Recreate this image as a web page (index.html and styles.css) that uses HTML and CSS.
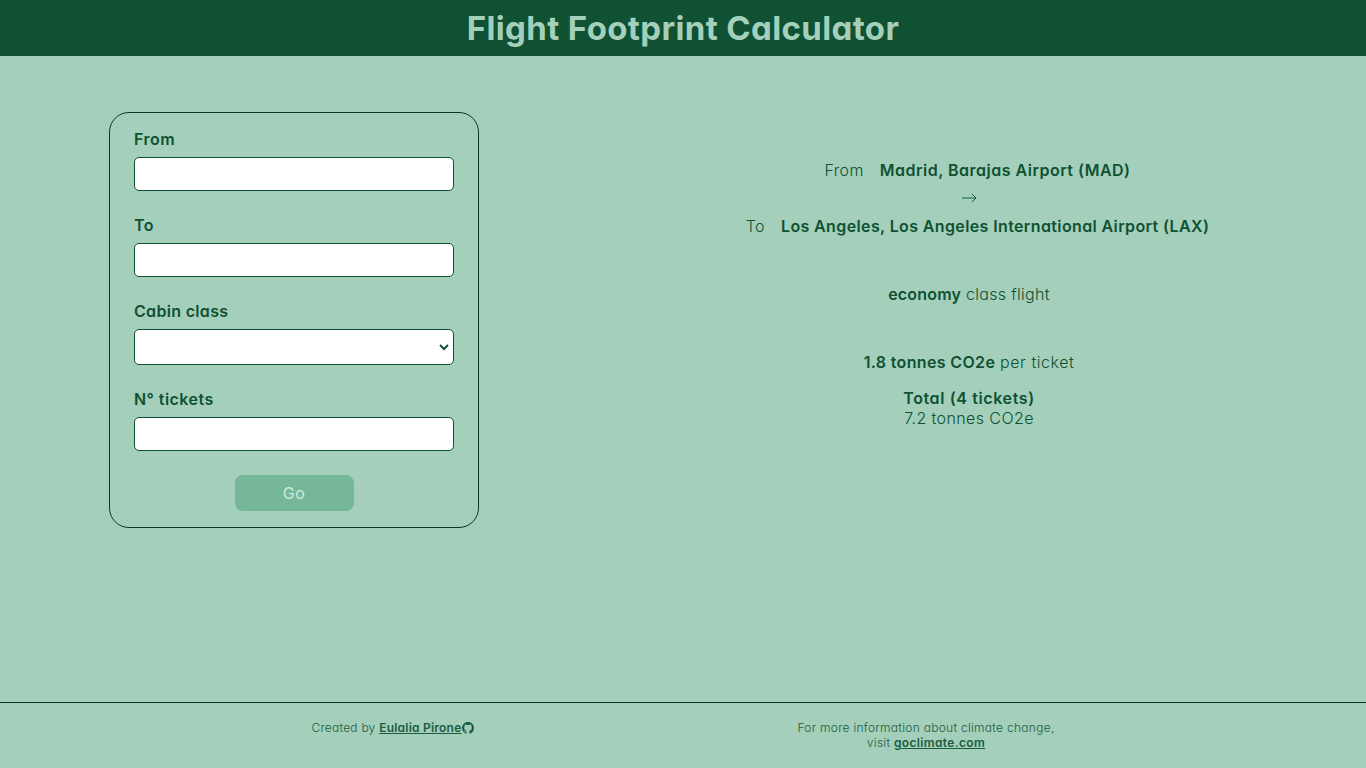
FILE: index.html
```html
<!DOCTYPE html>
<html lang="en">
<head>
<meta charset="utf-8">
<title>Flight Footprint Calculator</title>
<link rel="stylesheet" href="styles.css">
</head>
<body>
<header class="header"><h1 class="title">Flight Footprint Calculator</h1></header>
<main class="main">
  <form class="form">
    <div class="field"><label for="from">From</label><input id="from" type="text"></div>
    <div class="field"><label for="to">To</label><input id="to" type="text"></div>
    <div class="field"><label class="label-cabin" for="cabin">Cabin class</label><div class="select"><select id="cabin"><option value=""></option></select><svg class="chevron" viewBox="0 0 10 8" aria-hidden="true"><path d="M1 2L5 6L9 2"/></svg></div></div>
    <div class="field"><label for="tickets">N° tickets</label><input id="tickets" type="text"></div>
    <button class="go" type="button" disabled>Go</button>
  </form>
  <section class="results">
    <div class="route">
      <p class="leg"><span class="end">From</span><strong class="airport airport-from">Madrid, Barajas Airport (MAD)</strong></p>
      <svg class="arrow" viewBox="0 0 16 20" aria-hidden="true"><path d="M1 10H15M10.8 5.8L15 10L10.8 14.2"/></svg>
      <p class="leg"><span class="end">To</span><strong class="airport">Los Angeles, Los Angeles International Airport (LAX)</strong></p>
    </div>
    <p class="cabin"><strong>economy</strong> <span>class flight</span></p>
    <p class="per-ticket"><strong>1.8 tonnes CO2e</strong> <span>per ticket</span></p>
    <p class="total"><strong>Total (4 tickets)</strong><br>7.2 tonnes CO2e</p>
  </section>
</main>
<footer class="footer">
  <p class="author">Created by <a href="#">Eulalia Pirone</a><svg class="github" viewBox="0 0 16 16" aria-hidden="true"><path fill="currentColor" d="M8 0C3.58 0 0 3.58 0 8c0 3.54 2.29 6.53 5.47 7.59.4.07.55-.17.55-.38 0-.19-.01-.82-.01-1.49-2.01.37-2.53-.49-2.69-.94-.09-.23-.48-.94-.82-1.13-.28-.15-.68-.52-.01-.53.63-.01 1.08.58 1.23.82.72 1.21 1.87.87 2.33.66.07-.52.28-.87.51-1.07-1.78-.2-3.64-.89-3.64-3.95 0-.87.31-1.59.82-2.15-.08-.2-.36-1.02.08-2.12 0 0 .67-.21 2.2.82.64-.18 1.32-.27 2-.27s1.36.09 2 .27c1.53-1.04 2.2-.82 2.2-.82.44 1.1.16 1.92.08 2.12.51.56.82 1.27.82 2.15 0 3.07-1.87 3.75-3.65 3.95.29.25.54.73.54 1.48 0 1.07-.01 1.93-.01 2.2 0 .21.15.46.55.38A8.01 8.01 0 0 0 16 8c0-4.42-3.58-8-8-8"/></svg></p>
  <p class="info">For more information about climate change,<br>visit <a href="#">goclimate.com</a></p>
</footer>
</body>
</html>
```

FILE: styles.css
```css
* { box-sizing: border-box; }

body {
  margin: 0;
  min-height: 100vh;
  display: flex;
  flex-direction: column;
  background: #a3cfbb;
  color: #0f5132;
  font: 300 16px/20px Inter, sans-serif;
  font-feature-settings: "cv11";
  letter-spacing: 0.4px;
}

p { margin: 0; }
strong { font-weight: 600; }

.header {
  height: 56px;
  display: flex;
  align-items: center;
  justify-content: center;
  background: #0f5132;
}

.title {
  margin: 0;
  font-size: 33px;
  font-weight: 700;
  line-height: 40px;
  letter-spacing: 0.36px;
  color: #a3cfbb;
}

.main {
  flex: 1;
  display: flex;
  align-items: flex-start;
  justify-content: space-between;
  padding: 56px 109px 0;
}

.form {
  width: 370px;
  display: flex;
  flex-direction: column;
  gap: 24px;
  padding: 16px 24px;
  border: 1px solid #0a3622;
  border-radius: 20px;
}

.field {
  display: flex;
  flex-direction: column;
  gap: 8px;
}

.field label { font-weight: 600; letter-spacing: 0.45px; }
.field .label-cabin { letter-spacing: 0.32px; }

.field input,
.field select {
  width: 100%;
  height: 34px;
  padding: 0;
  border: 1px solid #0f5132;
  border-radius: 5px;
  background: #fff;
  color: #0f5132;
  font: inherit;
}

.select {
  display: grid;
  align-items: center;
}

.select > * { grid-area: 1 / 1; }

.field select {
  height: 36px;
  appearance: none;
}

.chevron {
  justify-self: end;
  width: 10px;
  height: 8px;
  margin-right: 5px;
  fill: none;
  stroke: #0f5132;
  stroke-width: 2;
  pointer-events: none;
}

.go {
  align-self: center;
  width: 119px;
  height: 36px;
  padding: 0;
  border: 0;
  border-radius: 8px;
  background: #75b798;
  color: #d1e7dd;
  font: 400 16px/20px Inter, sans-serif;
  letter-spacing: 0.5px;
}

.results {
  width: 576px;
  padding-top: 48px;
  text-align: center;
}

.route {
  display: flex;
  flex-direction: column;
  gap: 8px;
}

.leg {
  display: flex;
  justify-content: center;
}

.leg > * { margin-left: 16px; }
.leg .end { margin-left: 17px; letter-spacing: 0.4px; }
.airport { letter-spacing: 0.38px; }
.airport-from { letter-spacing: 0.5px; }

.arrow {
  align-self: center;
  width: 16px;
  height: 20px;
  fill: none;
  stroke: currentColor;
  stroke-width: 0.9;
}

.cabin,
.per-ticket { margin-top: 48px; }
.cabin strong { letter-spacing: 0.2px; }
.cabin span { letter-spacing: 0.3px; }
.per-ticket strong { letter-spacing: 0.35px; }
.per-ticket span { letter-spacing: 0.55px; }
.total { margin-top: 16px; }
.total strong { letter-spacing: 0.62px; }

.footer {
  height: 66px;
  display: flex;
  justify-content: center;
  gap: 323px;
  padding-top: 17px;
  border-top: 1px solid #0a3622;
  font-size: 12px;
  line-height: 15px;
  letter-spacing: 0.28px;
}

.footer p { opacity: 0.9; }
.footer a { color: inherit; font-weight: 600; }
.author { width: 163px; white-space: nowrap; letter-spacing: 0.23px; }
.info { width: 257px; white-space: nowrap; text-align: center; }
.info a { letter-spacing: 0.36px; }

.github {
  width: 12px;
  height: 12px;
  vertical-align: -2px;
}
```
